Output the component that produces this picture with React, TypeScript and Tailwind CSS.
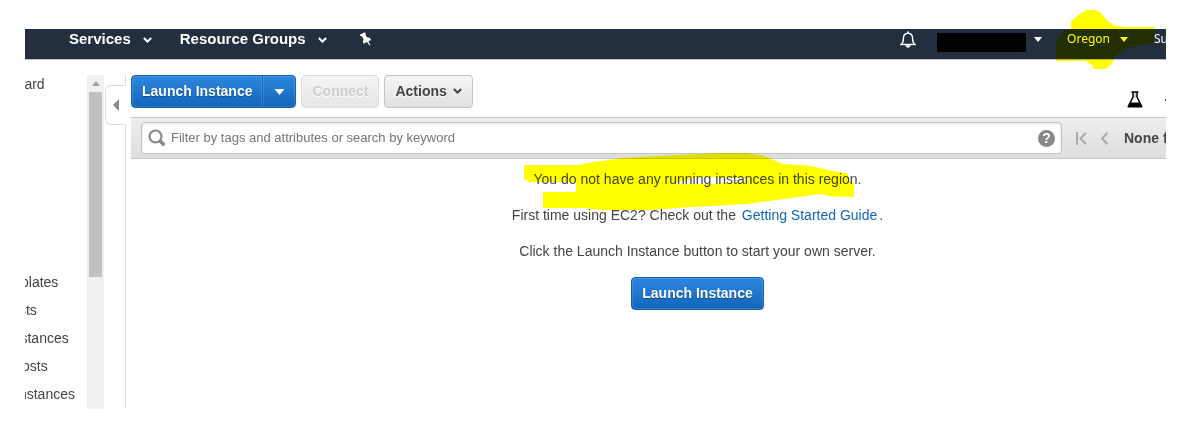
import { clsx } from "clsx";
import { ButtonHTMLAttributes, ReactNode } from "react";

const menuItems = [
    "Launch Templates",
    "Spot Requests",
    "Reserved Instances",
    "Dedicated Hosts",
    "Scheduled Instances",
];

type IconProps = {
    className?: string;
};

function ChevronIcon({ className }: IconProps) {
    return (
        <svg viewBox="0 0 9 6" className={clsx("h-1.5 w-[9px]", className)}>
            <path
                d="M0.8 1 L4.5 4.5 L8.2 1"
                fill="none"
                stroke="currentColor"
                strokeWidth="2"
            />
        </svg>
    );
}

function CaretIcon({ className }: IconProps) {
    return (
        <svg viewBox="0 0 10 6" className={className}>
            <path d="M0 0 H10 L5 6 Z" fill="currentColor" />
        </svg>
    );
}

function PinIcon() {
    return (
        <svg viewBox="0 0 13 14" className="h-3.5 w-[13px]">
            <path
                d="M1.6 2.2 L6 0.2 L6.8 1.6 L6.4 2.6 L8.2 5.6 L10.8 5.8 L12.2 8 L9.4 9.3 L11.4 13.2 L10.6 13.4 L8 10 L4.8 11.8 L3.8 9.8 L4.6 7.4 L3 4.4 L1.4 4 L0.6 3 Z"
                fill="currentColor"
            />
        </svg>
    );
}

function BellIcon() {
    return (
        <svg
            viewBox="0 0 16 17"
            className="h-[17px] w-4"
            fill="none"
            stroke="currentColor"
            strokeWidth="1.4"
        >
            <path d="M1 13.5 C3 12 3.4 10.5 3.4 7.5 C3.4 4.2 5 2.2 8 2.2 C11 2.2 12.6 4.2 12.6 7.5 C12.6 10.5 13 12 15 13.5 Z" />
            <path d="M8 0.2 V2.2" />
            <path d="M6.4 15 A1.7 1.4 0 0 0 9.6 15 Z" fill="currentColor" />
        </svg>
    );
}

function SearchIcon({ className }: IconProps) {
    return (
        <svg
            viewBox="0 0 18 18"
            className={clsx("size-[18px]", className)}
            fill="none"
            stroke="currentColor"
        >
            <circle cx="7.5" cy="7.5" r="6" strokeWidth="2.2" />
            <path d="M11.5 11.5 L16.5 16.3" strokeWidth="3.6" />
        </svg>
    );
}

function FlaskIcon() {
    return (
        <svg viewBox="0 0 16 17" className="h-[17px] w-4">
            <path
                d="M4.5 1 H11.5 M6 1 V6 L1.5 15 H14.5 L10 6 V1"
                fill="none"
                stroke="#000"
                strokeWidth="1.5"
            />
            <path d="M3 11.5 H13 L15.5 16.5 H0.5 Z" fill="#000" />
            <path d="M8 2 V7" stroke="#999" />
        </svg>
    );
}

function PrimaryButton({
    className,
    children,
    ...props
}: ButtonHTMLAttributes<HTMLButtonElement>) {
    return (
        <button
            type="button"
            className={clsx(
                "flex h-[33px] items-center justify-center border border-[#0f61b2] bg-linear-to-b from-[#2e86de] to-[#1166bb] pb-0.5 text-sm font-bold text-white shadow-[inset_0_0_0_1px_#ffffff22] [text-shadow:0_1px_1px_#0a4a8c]",
                className
            )}
            {...props}
        >
            {children}
        </button>
    );
}

function NavButton({ children }: { children: ReactNode }) {
    return (
        <button
            type="button"
            className="flex items-center gap-3 text-[15px] leading-5 font-bold"
        >
            {children}
            <ChevronIcon className="mt-0.5" />
        </button>
    );
}

function Header() {
    return (
        <header className="flex h-[31px] items-start justify-between border-b border-[#b9bec4] bg-[#232f3e] pl-11 text-white [text-shadow:0_1px_1px_#000]">
            <nav className="flex h-5 items-center gap-7">
                <NavButton>Services</NavButton>
                <NavButton>Resource Groups</NavButton>
                <button type="button" aria-label="Pin shortcuts" className="ml-1">
                    <PinIcon />
                </button>
            </nav>

            <div className="flex h-5 items-center font-['Noto_Sans',sans-serif] text-xs leading-5">
                <button type="button" aria-label="Notifications">
                    <BellIcon />
                </button>
                <button
                    type="button"
                    aria-label="Account"
                    className="ml-[21px] flex items-center gap-2"
                >
                    <span className="mt-1.5 h-[19px] w-[89px] bg-black" />
                    <CaretIcon className="h-[5px] w-2" />
                </button>
                <button
                    type="button"
                    className="relative ml-[25px] flex items-center gap-2.5"
                >
                    Oregon
                    <CaretIcon className="h-[5px] w-2" />
                    <svg
                        viewBox="0 0 100 60"
                        className="pointer-events-none absolute -top-5 -left-[11px] h-[60px] w-[100px] max-w-none mix-blend-multiply"
                    >
                        <path
                            d="M15 12 L25 4 L31 1 H40 L45 4 L51 11 L58 16.5 L70 18 H98.5 V34 L80 37 L71 40 L61 45.5 L58 50 L55 56 L50 60 H38 L36 56 L30 52 H0 V34 L3 27 L8 22 L15 20 Z"
                            fill="#ffff00"
                        />
                    </svg>
                </button>
                <div className="ml-[26px] w-3 overflow-hidden">
                    <button type="button">Support</button>
                </div>
            </div>
        </header>
    );
}

function Sidebar() {
    return (
        <aside className="flex">
            <nav className="w-[62px] overflow-hidden">
                <ul className="-ml-20 w-[142px] text-sm leading-7 whitespace-nowrap">
                    <li className="-mt-[5px] mb-[170px]">
                        <a href="#dashboard">EC2 Dashboard</a>
                    </li>
                    {menuItems.map((item) => (
                        <li key={item}>
                            <a href="#menu">{item}</a>
                        </li>
                    ))}
                </ul>
            </nav>

            <div className="flex w-[17px] flex-col items-center bg-[#f1f1f1]">
                <CaretIcon className="my-1.5 h-[5px] w-2 rotate-180 text-[#a3a3a3]" />
                <div className="h-[185px] w-[13px] bg-[#c1c1c1]" />
            </div>

            <div className="flex w-[22px] flex-col">
                <div className="h-2.5 border-r border-[#ddd]" />
                <button
                    type="button"
                    aria-label="Collapse sidebar"
                    className="ml-px flex h-10 items-center rounded-l-md border border-r-0 border-[#ddd] pl-[7px]"
                >
                    <svg viewBox="0 0 6 12" className="h-3 w-1.5">
                        <path d="M6 0 V12 L0 6 Z" fill="#888" />
                    </svg>
                </button>
                <div className="flex-1 border-r border-[#ddd]" />
            </div>
        </aside>
    );
}

function Toolbar() {
    return (
        <div className="flex h-[42px] items-start justify-between">
            <div className="flex">
                <PrimaryButton className="rounded-l px-2.5">
                    Launch Instance
                </PrimaryButton>
                <PrimaryButton
                    aria-label="More launch options"
                    className="-ml-px w-[34px] rounded-r"
                >
                    <CaretIcon className="mt-0.5 h-1.5 w-[11px]" />
                </PrimaryButton>
                <button
                    type="button"
                    disabled
                    className="ml-[5px] h-[33px] rounded border border-[#ddd] bg-linear-to-b from-[#f5f5f5] to-[#e6e6e6] px-2.5 pb-0.5 text-sm font-bold text-[#ccc] [text-shadow:0_1px_0_#fff]"
                >
                    Connect
                </button>
                <button
                    type="button"
                    className="ml-[5px] flex h-[33px] items-center gap-1.5 rounded border border-[#c4c4c4] bg-linear-to-b from-[#f6f6f6] to-[#e0e0e0] px-2.5 pb-0.5 text-sm font-bold text-[#444] [text-shadow:0_1px_0_#fff]"
                >
                    Actions
                    <ChevronIcon />
                </button>
            </div>

            <div className="mt-4 flex items-center gap-[22px] overflow-hidden">
                <button type="button" aria-label="Experiments">
                    <FlaskIcon />
                </button>
                <span className="h-0.5 w-px bg-[#444]" />
            </div>
        </div>
    );
}

function FilterBar() {
    return (
        <div className="flex h-[42px] items-center border-y border-[#c8c8c8] bg-linear-to-b from-[#eee] to-[#ddd] pl-2.5">
            <div className="flex h-8 flex-1 items-center rounded border border-[#c4c4c4] bg-white px-1.5 shadow-[inset_0_1px_3px_#0000001a]">
                <SearchIcon className="text-[#888]" />
                <input
                    type="text"
                    aria-label="Filter instances"
                    placeholder="Filter by tags and attributes or search by keyword"
                    className="ml-[5px] flex-1 text-[13px] outline-none placeholder:text-[#757575]"
                />
                <button
                    type="button"
                    aria-label="Help"
                    className="flex size-[17px] items-center justify-center rounded-full bg-[#888] text-sm font-bold text-white"
                >
                    ?
                </button>
            </div>
            <div className="ml-3.5 flex items-center gap-3.5 text-[#aaa]">
                <button type="button" aria-label="First page">
                    <svg
                        viewBox="0 0 11 13"
                        className="h-[13px] w-[11px]"
                        fill="none"
                        stroke="currentColor"
                        strokeWidth="2"
                    >
                        <path d="M1 0 V13 M10 0.8 L4.5 6.5 L10 12.2" />
                    </svg>
                </button>
                <button type="button" aria-label="Previous page">
                    <svg
                        viewBox="0 0 7 13"
                        className="h-[13px] w-[7px]"
                        fill="none"
                        stroke="currentColor"
                        strokeWidth="2"
                    >
                        <path d="M6.5 0.8 L1.2 6.5 L6.5 12.2" />
                    </svg>
                </button>
                <span className="ml-0.5 w-[42px] overflow-hidden text-sm font-bold whitespace-nowrap text-[#444]">
                    None found
                </span>
            </div>
        </div>
    );
}

function EmptyState() {
    return (
        <div className="flex flex-col items-center gap-4 pt-2.5 pl-[98px] text-sm">
            <p className="relative">
                You do not have any running instances in this region.
                <svg
                    viewBox="0 0 331 58"
                    className="pointer-events-none absolute -top-4 -left-2.5 h-[58px] w-[331px] max-w-none mix-blend-multiply"
                >
                    <path
                        d="M0 12 H53 L73 8.5 L99 5 L154 2 L199 0 H221 L239 2.500 L259 11 L284 12.5 L309 18 L324 20.5 V27 L330 30 V44 L309 43.5 L296 41 L253 47 L223 51 L168 54 L123 57 H79 L59 55 H19 V39 H52 V29 H5 L4 27 H0 Z M146 31 L164 27 L172 24 H192 L194 25 H225 L223 28 L190 31 Z"
                        fill="#ffff00"
                        fillRule="evenodd"
                    />
                </svg>
            </p>
            <p>
                First time using EC2? Check out the{" "}
                <a href="#guide" className="mx-0.5 text-[#1166bb]">
                    Getting Started Guide
                </a>
                .
            </p>
            <p>Click the Launch Instance button to start your own server.</p>
            <PrimaryButton className="rounded px-2.5">
                Launch Instance
            </PrimaryButton>
        </div>
    );
}

function App() {
    return (
        <div className="min-h-screen bg-white pt-[29px] pr-[22px] pb-[31px] pl-[25px] font-['Liberation_Sans',Arial,sans-serif] text-[#444]">
            <Header />
            <div className="mt-[15px] flex min-h-[334px]">
                <Sidebar />
                <main className="ml-[5px] min-w-0 flex-1">
                    <Toolbar />
                    <FilterBar />
                    <EmptyState />
                </main>
            </div>
        </div>
    );
}

export default App;
